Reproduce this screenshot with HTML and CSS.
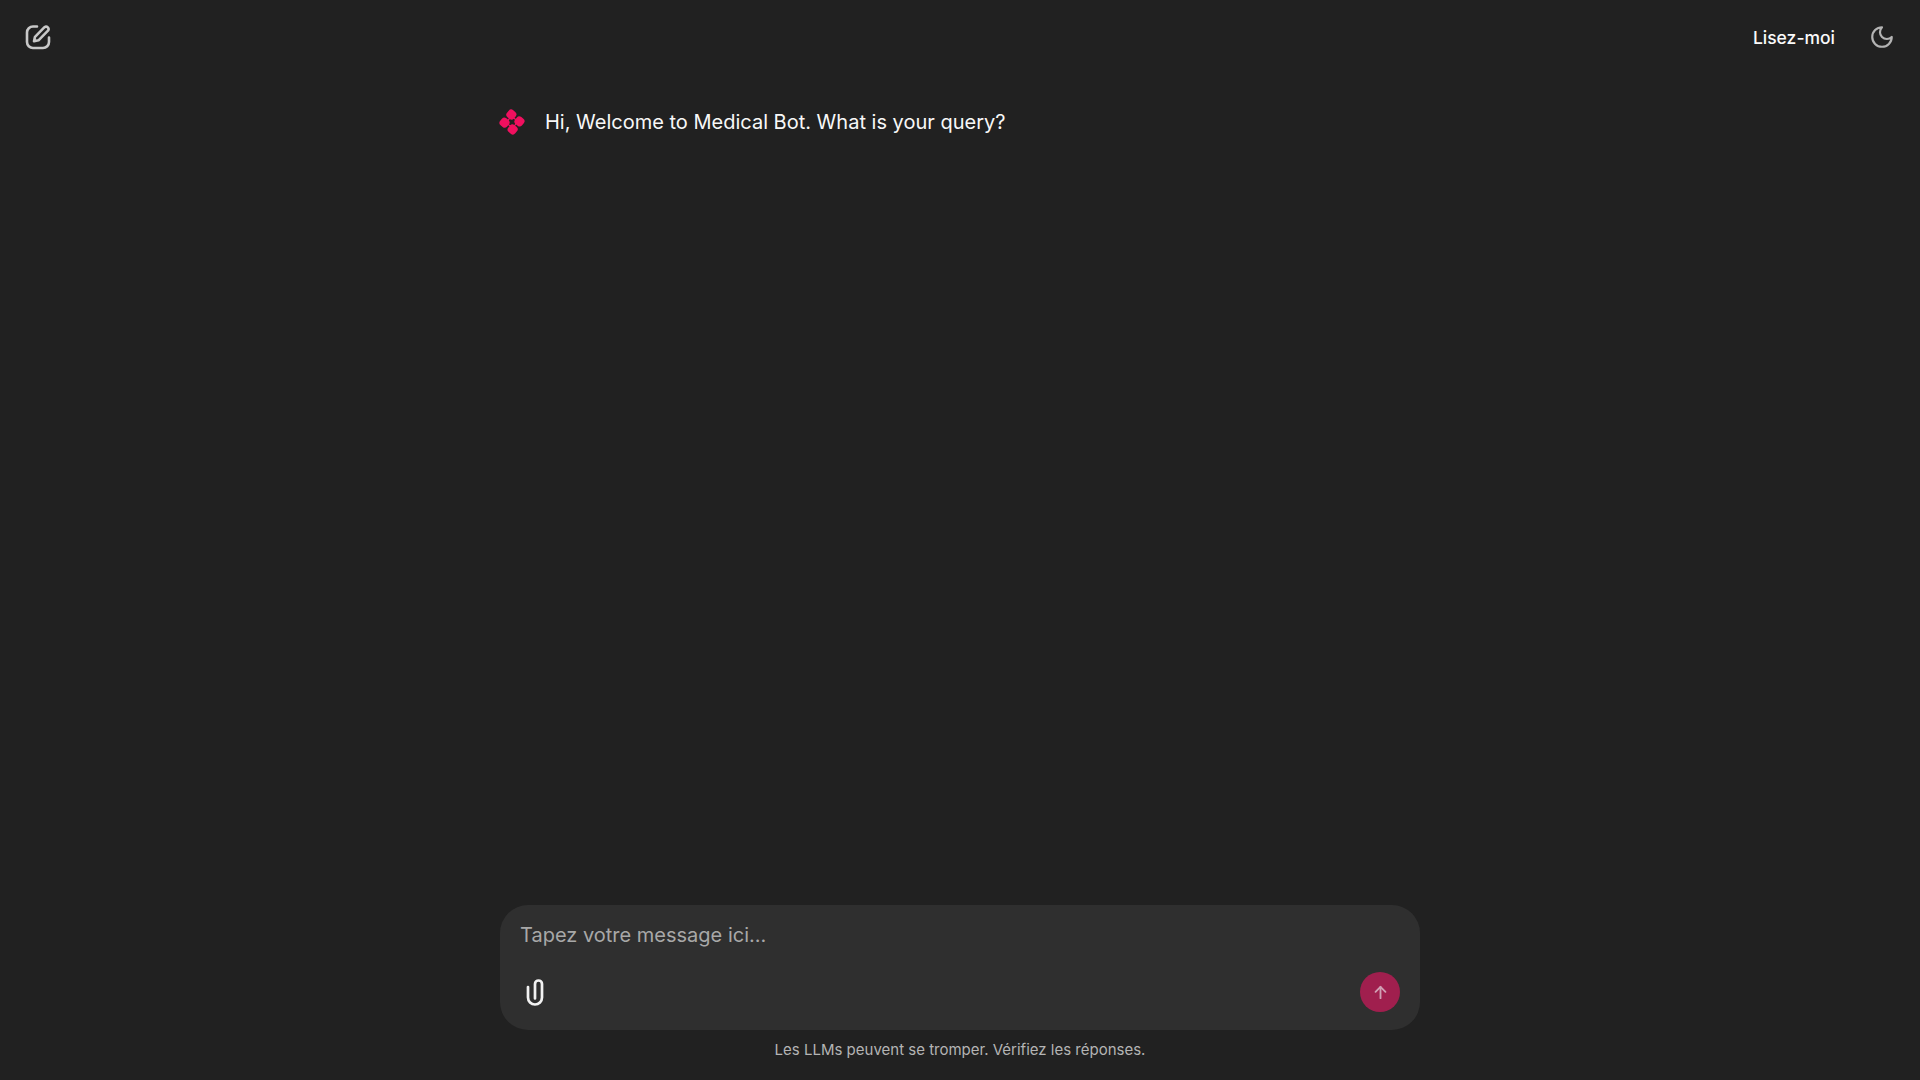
FILE: index.html
```html
<!DOCTYPE html>
<html lang="fr">
<head>
<meta charset="utf-8">
<title>Medical Bot</title>
<link rel="stylesheet" href="styles.css">
</head>
<body>
<div class="app">
  <header class="topbar">
    <button class="icon-btn" aria-label="Nouveau">
      <svg width="26" height="26" viewBox="0 0 26 26" fill="none" stroke="#c8c8c8" stroke-width="2.6" stroke-linecap="round" stroke-linejoin="round"><path d="M12 2.5H8a6 6 0 0 0-6 6v9.5a6 6 0 0 0 6 6h10a6 6 0 0 0 6-6v-4.500"/><path d="M19.500 3.200a2.500 2.500 0 0 1 3.500 3.500L13.500 16.300l-4.500 1 1-4.500Z"/></svg>
    </button>
    <div class="topbar-right">
      <span class="readme">Lisez-moi</span>
      <button class="icon-btn" aria-label="Thème">
        <svg width="26" height="26" viewBox="0 0 24 24" fill="none" stroke="#b4b4b4" stroke-width="2" stroke-linecap="round" stroke-linejoin="round"><path d="M12 3a6 6 0 0 0 9 9 9 9 0 1 1-9-9Z"/></svg>
      </button>
    </div>
  </header>
  <main class="thread">
    <div class="message">
      <svg class="logo" width="28" height="28" viewBox="0 0 28 28"><g fill="#f0105f" transform="rotate(-5 14 14)"><rect x="9.500" y="2" width="9" height="9" rx="3.200" transform="rotate(45 14 6.500)"/><rect x="9.500" y="17" width="9" height="9" rx="3.200" transform="rotate(45 14 21.500)"/><rect x="2" y="9.500" width="9" height="9" rx="3.200" transform="rotate(45 6.500 14)"/><rect x="17" y="9.500" width="9" height="9" rx="3.200" transform="rotate(45 21.500 14)"/></g><circle cx="14" cy="14" r="4.200" fill="none" stroke="#f0105f" stroke-width="1.400"/></svg>
      <p class="message-text">Hi, Welcome to Medical Bot. What is your query?</p>
    </div>
  </main>
  <footer class="composer-wrap">
    <div class="composer">
      <div class="placeholder">Tapez votre message ici...</div>
      <div class="composer-actions">
        <button class="icon-btn attach" aria-label="Joindre">
          <svg width="24" height="28" viewBox="0 0 24 28" fill="none" stroke="#f2f2f2" stroke-width="2.700" stroke-linecap="round" stroke-linejoin="round"><path d="M5 9v10.500a7 7 0 0 0 14 0V6a3.500 3.500 0 0 0-7 0v14.500"/></svg>
        </button>
        <button class="send" aria-label="Envoyer">
          <svg width="17" height="17" viewBox="0 0 24 24" fill="none" stroke="#d0a0b4" stroke-width="2.600" stroke-linecap="round" stroke-linejoin="round"><path d="M12 20V4"/><path d="M5 11l7-7 7 7"/></svg>
        </button>
      </div>
    </div>
    <p class="disclaimer">Les LLMs peuvent se tromper. Vérifiez les réponses.</p>
  </footer>
</div>
</body>
</html>
```

FILE: styles.css
```css
* { box-sizing: border-box; }
html, body { margin: 0; height: 100%; }
body {
  background: #212121;
  color: #f5f5f5;
  font-family: Inter, "Liberation Sans", sans-serif;
}
.app {
  height: 100vh;
  display: flex;
  flex-direction: column;
}
.topbar {
  display: flex;
  justify-content: space-between;
  align-items: center;
  height: 74px;
  padding: 0 25px 0 25px;
  flex: none;
}
.topbar-right {
  display: flex;
  align-items: center;
  gap: 34px;
}
.readme {
  font-size: 17.5px;
  font-weight: 500;
  color: #fafafa;
}
.icon-btn {
  background: none;
  border: 0;
  padding: 0;
  display: flex;
  align-items: center;
  justify-content: center;
}
.thread {
  flex: 1;
  width: 920px;
  margin: 0 auto;
  padding-top: 31px;
}
.message {
  display: flex;
  align-items: center;
  gap: 19px;
  height: 34px;
}
.logo { flex: none; margin-left: -2px; }
.message-text {
  margin: 0;
  font-size: 20px;
  line-height: 34px;
  color: #f8f8f8;
}
.composer-wrap {
  width: 920px;
  margin: 0 auto;
  flex: none;
}
.composer {
  height: 125px;
  background: #2f2f2f;
  border-radius: 28px;
  padding: 15px 20px 18px;
  display: flex;
  flex-direction: column;
  justify-content: space-between;
}
.placeholder {
  font-size: 20px;
  line-height: 30px;
  color: #a8a8a8;
}
.composer-actions {
  display: flex;
  justify-content: space-between;
  align-items: center;
}
.attach { width: 24px; height: 40px; margin-left: 3px; }
.send {
  width: 40px;
  height: 40px;
  border: 0;
  padding: 0;
  border-radius: 50%;
  background: #a01f4e;
  display: flex;
  align-items: center;
  justify-content: center;
}
.disclaimer {
  margin: 0;
  height: 50px;
  padding-top: 10px;
  text-align: center;
  font-size: 15px;
  line-height: 20px;
  color: #b4b4b4;
}
```
